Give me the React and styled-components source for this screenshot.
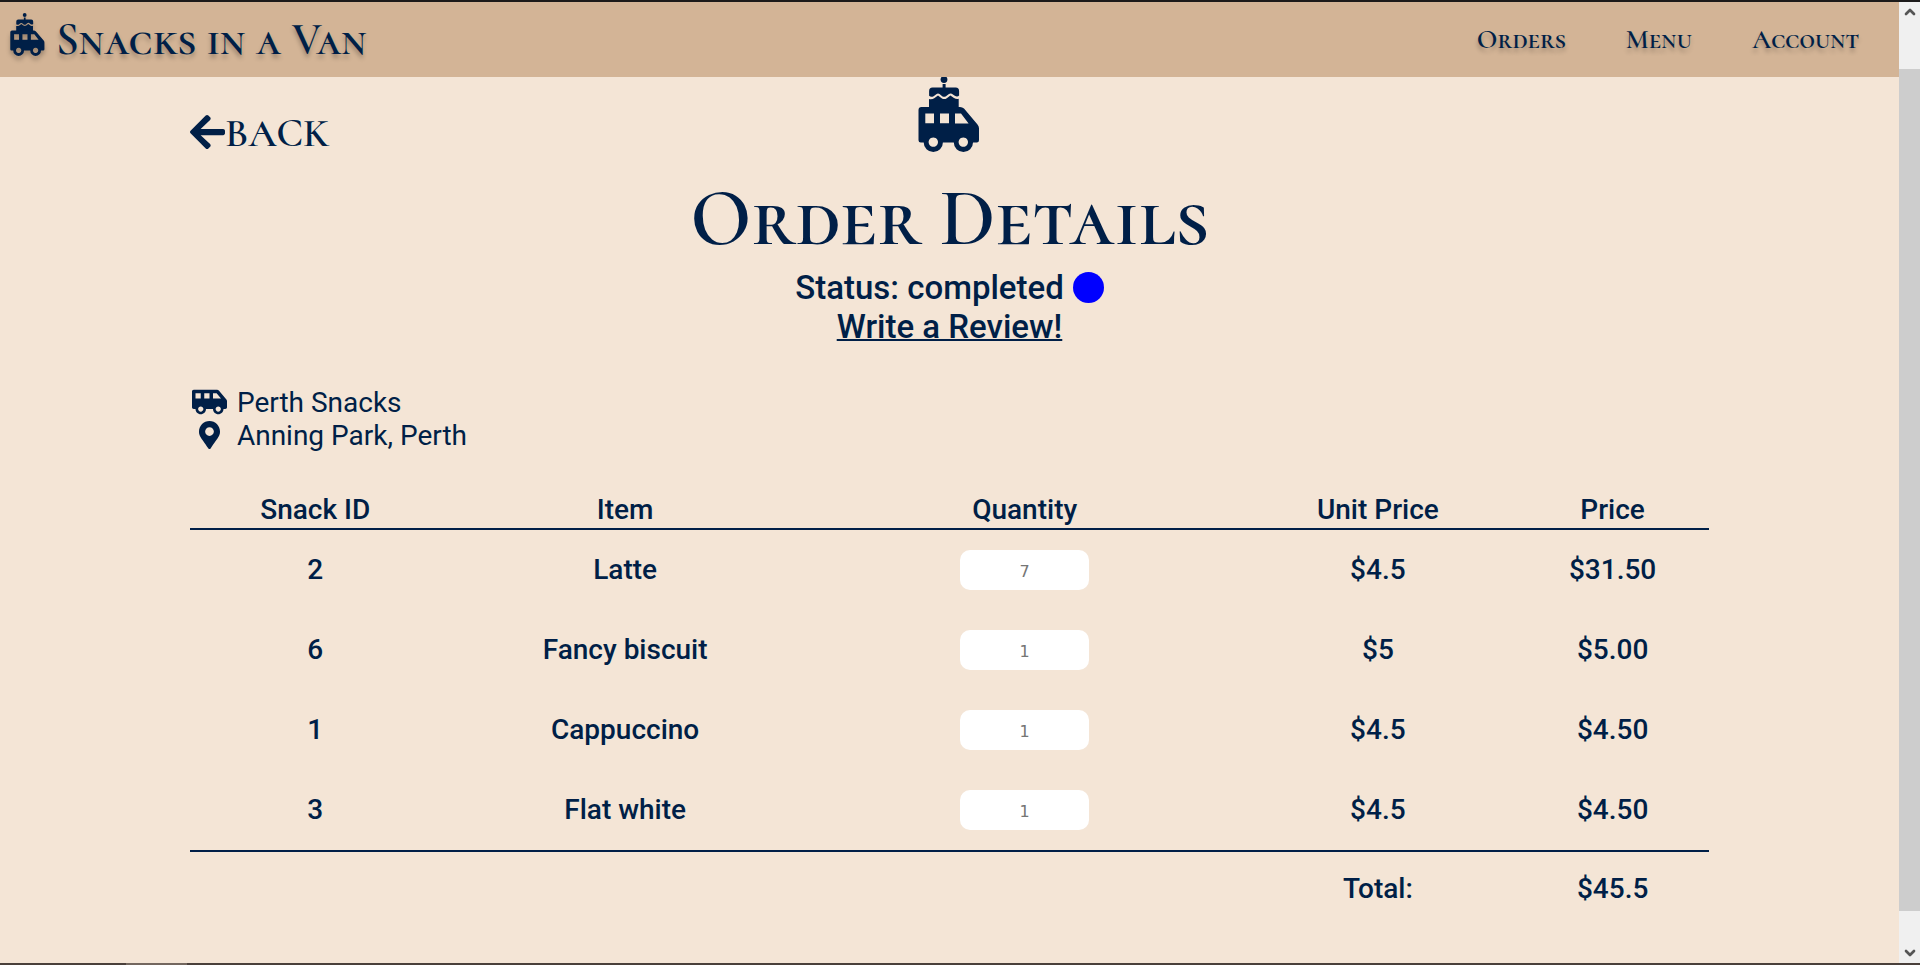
import React from "react";
import styled, { createGlobalStyle } from "styled-components";
import { FaArrowLeft, FaMapMarkerAlt, FaShuttleVan } from "react-icons/fa";
import { ChevronDown, ChevronUp } from "lucide-react";

const navy = "#001f47";
const serif = `"Cormorant SC", "Liberation Serif", serif`;

const GlobalStyle = createGlobalStyle`
  *, *::before, *::after { box-sizing: border-box; }
  body {
    margin: 0;
    background: #f4e5d6;
    color: ${navy};
    font-family: Roboto, sans-serif;
  }
`;

const Window = styled.div`
  display: flex;
  flex-direction: column;
  min-height: 100vh;
  border-top: 2px solid #1c1a1a;
`;

const Viewport = styled.div`
  display: flex;
  flex: 1;
`;

const Page = styled.div`
  flex: 1;
  min-width: 0;
`;

const BottomEdge = styled.div`
  height: 2px;
  padding-left: 126px;
  background: #4a403b;
`;

const BottomEdgeTab = styled.div`
  width: 61px;
  height: 2px;
  background: #73675f;
`;

const ScrollTrack = styled.div`
  display: flex;
  flex-direction: column;
  width: 21px;
  background: #f0f0f0;
  color: #555;
`;

const ScrollButton = styled.button`
  display: flex;
  justify-content: center;
  align-items: center;
  height: 20px;
  padding: 0;
  border: 0;
  background: none;
  color: inherit;
`;

const ScrollThumb = styled.div`
  flex: 1;
  margin: 47px 0 32px;
  background: #cdcdcd;
`;

const TopBar = styled.header`
  display: flex;
  justify-content: space-between;
  align-items: center;
  height: 75px;
  padding: 0 40px 0 10px;
  background: #d3b496;
  font-family: ${serif};
  font-weight: 600;
  text-shadow: 0 4px 4px rgba(0, 0, 0, 0.25);
`;

const Brand = styled.a`
  display: flex;
  align-items: center;
  gap: 11px;
  color: inherit;
  font-size: 45px;
  line-height: 52px;
  text-decoration: none;

  svg {
    margin-bottom: 10px;
    filter: drop-shadow(0 4px 2px rgba(0, 0, 0, 0.25));
  }
`;

const Nav = styled.nav`
  display: flex;
  gap: 60px;
`;

const NavLink = styled.a`
  color: inherit;
  font-size: 27px;
  line-height: 32px;
  text-decoration: none;
`;

const Content = styled.main`
  width: 80%;
  margin: 0 auto;
`;

const Intro = styled.section`
  display: grid;
  grid-template-columns: 1fr auto 1fr;
  align-items: start;
`;

const BackLink = styled.a`
  display: flex;
  align-items: center;
  justify-self: start;
  margin-top: 32px;
  color: inherit;
  font-family: ${serif};
  font-size: 40px;
  font-weight: 600;
  line-height: 48px;
  text-decoration: none;

  svg {
    width: 35px;
    height: 40px;
    margin-bottom: 2px;
  }
`;

const Summary = styled.div`
  display: flex;
  flex-direction: column;
  align-items: center;
  font-size: 33px;
  font-weight: 500;
  line-height: 39px;
`;

const Title = styled.h1`
  margin: 20px 0 3px;
  font-family: ${serif};
  font-size: 80px;
  font-weight: 600;
  line-height: 92px;
  white-space: nowrap;
`;

const Status = styled.div`
  display: flex;
  align-items: center;
  gap: 9px;
`;

const StatusDot = styled.span`
  width: 31px;
  height: 31px;
  border-radius: 50%;
  background: #0000ff;
`;

const ReviewLink = styled.a`
  color: inherit;
  text-decoration: underline;
  text-decoration-thickness: 2px;
`;

const VanInfo = styled.ul`
  margin: 40px 0 0;
  padding: 0;
  list-style: none;
  font-size: 28px;
  line-height: 33px;
`;

const VanInfoRow = styled.li`
  display: flex;
  align-items: center;
  gap: 7px;
`;

const IconSlot = styled.span`
  display: flex;
  justify-content: center;
  width: 40px;
  padding-bottom: 2px;

  svg {
    width: 35px;
    height: 28px;
  }
`;

const OrderTable = styled.table`
  width: 100%;
  margin-top: 38px;
  border-collapse: separate;
  border-spacing: 0;
  table-layout: fixed;
  font-size: 28px;
  font-weight: 500;
  line-height: 32px;
  text-align: center;
`;

const Column = styled.col`
  width: ${(p) => p.$share}%;
`;

const HeadCell = styled.th`
  padding: 4px 0 2px;
  border-bottom: 2px solid ${navy};
  font-weight: 500;
`;

const Cell = styled.td`
  height: 80px;
  padding: 0;
`;

const FootCell = styled.td`
  height: 76px;
  padding: 0;
  border-top: 2px solid ${navy};
`;

const QuantityInput = styled.input`
  display: block;
  width: 129px;
  height: 40px;
  margin: 0 auto;
  padding: 2px 0 0;
  border: 0;
  border-radius: 10px;
  background: #fff;
  color: #757575;
  font-family: "DejaVu Sans", sans-serif;
  font-size: 16px;
  text-align: center;
`;

function CakeVan({ width, height }) {
  return (
    <svg width={width} height={height} viewBox="0 0 62 76" fill="currentColor" aria-hidden="true">
      <circle cx="26" cy="2.6" r="3.4" />
      <rect x="24.6" y="7" width="3" height="6" />
      <path d="M14.5 10.6h23.2q3.4 0 3.4 3.6v4.4q-1.8 1.8-4.3.2l-3-2.1q-1.6-.8-3.2.5l-2.6 2q-2 1.2-3.8 0l-2.7-2.2q-1.6-1-3.2.2l-2.7 2q-2.5 1.4-4.5-.4v-4.6q0-3.6 3.4-3.6z" />
      <path d="M11 22q3 .8 5.6-1l3.4-2.4 3.6 2.6q2.7 1.7 5.2 0l3.6-2.8 3.6 2.6q2.4 1.4 4.7.8v9H11z" />
      <path
        fillRule="evenodd"
        d="M3.5 30h38.500q2.400 0 4 1.600l13.300 15.700q1.700 1.800 1.700 4v12q0 2.200-2.200 2.200h-3.800a9.600 9.600 0 0 1-19.200 0H24.900a9.600 9.600 0 0 1-19.200 0H2.800Q.5 65.500.5 63.200V33q0-3 3-3z
        M7.300 36.500v9.700h8.700v-9.700zM22 36.500v9.700h9v-9.700zM37 36.500v9.900h13.600l-7.600-9.900z
        M15.300 60.400a4.700 4.700 0 1 0 .01 0zM45.300 60.400a4.700 4.700 0 1 0 .01 0z"
      />
    </svg>
  );
}

const columns = [
  { label: "Snack ID", share: 16.5 },
  { label: "Item", share: 24.3 },
  { label: "Quantity", share: 28.3 },
  { label: "Unit Price", share: 18.2 },
  { label: "Price", share: 12.7 },
];

const items = [
  { id: 2, name: "Latte", quantity: 7, unit: "$4.5", price: "$31.50" },
  { id: 6, name: "Fancy biscuit", quantity: 1, unit: "$5", price: "$5.00" },
  { id: 1, name: "Cappuccino", quantity: 1, unit: "$4.5", price: "$4.50" },
  { id: 3, name: "Flat white", quantity: 1, unit: "$4.5", price: "$4.50" },
];

export default function App() {
  return (
    <Window>
      <GlobalStyle />
      <Viewport>
        <Page>
          <TopBar>
            <Brand href="#home">
              <CakeVan width={35} height={44} />
              Snacks in a Van
            </Brand>
            <Nav>
              <NavLink href="#orders">Orders</NavLink>
              <NavLink href="#menu">Menu</NavLink>
              <NavLink href="#account">Account</NavLink>
            </Nav>
          </TopBar>
          <Content>
            <Intro>
              <BackLink href="#back">
                <FaArrowLeft />
                BACK
              </BackLink>
              <Summary>
                <CakeVan width={62} height={76} />
                <Title>Order Details</Title>
                <Status>
                  Status: completed
                  <StatusDot />
                </Status>
                <ReviewLink href="#review">Write a Review!</ReviewLink>
              </Summary>
            </Intro>
            <VanInfo>
              <VanInfoRow>
                <IconSlot>
                  <FaShuttleVan />
                </IconSlot>
                Perth Snacks
              </VanInfoRow>
              <VanInfoRow>
                <IconSlot>
                  <FaMapMarkerAlt />
                </IconSlot>
                Anning Park, Perth
              </VanInfoRow>
            </VanInfo>
            <OrderTable>
              <colgroup>
                {columns.map((c) => (
                  <Column key={c.label} $share={c.share} />
                ))}
              </colgroup>
              <thead>
                <tr>
                  {columns.map((c) => (
                    <HeadCell key={c.label} scope="col">
                      {c.label}
                    </HeadCell>
                  ))}
                </tr>
              </thead>
              <tbody>
                {items.map((item) => (
                  <tr key={item.id}>
                    <Cell>{item.id}</Cell>
                    <Cell>{item.name}</Cell>
                    <Cell>
                      <QuantityInput
                        type="text"
                        inputMode="numeric"
                        aria-label={`Quantity of ${item.name}`}
                        defaultValue={item.quantity}
                      />
                    </Cell>
                    <Cell>{item.unit}</Cell>
                    <Cell>{item.price}</Cell>
                  </tr>
                ))}
              </tbody>
              <tfoot>
                <tr>
                  <FootCell colSpan={3} />
                  <FootCell>Total:</FootCell>
                  <FootCell>$45.5</FootCell>
                </tr>
              </tfoot>
            </OrderTable>
          </Content>
        </Page>
        <ScrollTrack>
          <ScrollButton aria-label="Scroll up">
            <ChevronUp size={16} strokeWidth={4} />
          </ScrollButton>
          <ScrollThumb />
          <ScrollButton aria-label="Scroll down">
            <ChevronDown size={16} strokeWidth={4} />
          </ScrollButton>
        </ScrollTrack>
      </Viewport>
      <BottomEdge>
        <BottomEdgeTab />
      </BottomEdge>
    </Window>
  );
}
